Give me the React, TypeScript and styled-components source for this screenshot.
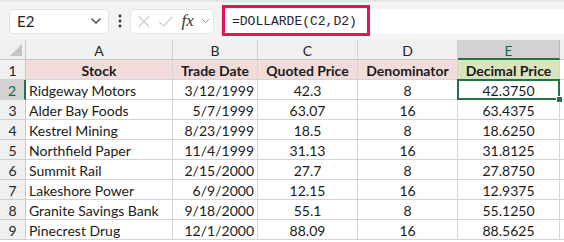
import React from "react";
import styled, { createGlobalStyle } from "styled-components";

const GlobalStyle = createGlobalStyle`
  html, body { margin: 0; padding: 0; background: #ffffff; }
  body { font-family: Lato, "Liberation Sans", sans-serif; }
`;

const rows = [
  ["Ridgeway Motors", "3/12/1999", "42.3", "8", "42.3750"],
  ["Alder Bay Foods", "5/7/1999", "63.07", "16", "63.4375"],
  ["Kestrel Mining", "8/23/1999", "18.5", "8", "18.6250"],
  ["Northfield Paper", "11/4/1999", "31.13", "16", "31.8125"],
  ["Summit Rail", "2/15/2000", "27.7", "8", "27.8750"],
  ["Lakeshore Power", "6/9/2000", "12.15", "16", "12.9375"],
  ["Granite Savings Bank", "9/18/2000", "55.1", "8", "55.1250"],
  ["Pinecrest Drug", "12/1/2000", "88.09", "16", "88.5625"],
];

const Page = styled.div`
  width: 564px;
  height: 242px;
  overflow: hidden;
  background: #fff;
`;

const Toolbar = styled.div`
  height: 40px;
  background: #f3f3f3;
  border-top: 2px solid #e6e6e6;
  box-sizing: border-box;
  display: flex;
  align-items: center;
  padding: 0 0 0 9px;
`;

const Field = styled.div<{ $w: number }>`
  width: ${(p) => p.$w}px;
  height: 25px;
  box-sizing: border-box;
  background: #fff;
  border: 1px solid #e4e4e4;
  border-radius: 4px;
  display: flex;
  align-items: center;
`;

const NameBox = styled(Field)`
  padding: 0 6px 0 7px;
  justify-content: space-between;
  font-size: 15px;
  color: #1f1f1f;
`;

const Dots = styled.div`
  width: 21px;
  display: flex;
  justify-content: center;
`;

const FxBox = styled(Field)`
  margin-right: 7px;
  padding: 0 3px 0 6px;
  gap: 7px;
`;

const Fx = styled.span`
  font-family: "Liberation Serif", serif;
  font-style: italic;
  font-size: 17px;
  color: #333;
  margin-left: 1px;
`;

const FormulaBox = styled.div`
  flex: 1;
  height: 25px;
  background: #fff;
  border-left: 1px solid #e4e4e4;
  border-radius: 4px 0 0 4px;
  position: relative;
  display: flex;
  align-items: center;
  padding-left: 10px;
  font-family: "Liberation Mono", monospace;
  font-size: 13px;
  color: #1d2430;
`;

const Highlight = styled.div`
  position: absolute;
  left: 0;
  top: -4px;
  width: 148px;
  height: 31px;
  box-sizing: border-box;
  border: 3px solid #e3174d;
`;

const Grid = styled.div`
  display: grid;
  grid-template-columns: 26px 147px 85px 100px 100px 102px 1fr;
  grid-auto-rows: 20px;
  font-size: 14px;
  color: #1a1a1a;
`;

const Cell = styled.div<{
  $align?: "left" | "right" | "center";
  $bg?: string;
  $bold?: boolean;
}>`
  box-sizing: border-box;
  border-right: 1px solid #d4d4d4;
  border-bottom: 1px solid #d4d4d4;
  background: ${(p) => p.$bg || "#fff"};
  font-weight: ${(p) => (p.$bold ? 700 : 400)};
  text-align: ${(p) => p.$align || "left"};
  padding: 1px 3px 0;
  line-height: 19px;
  white-space: nowrap;
  overflow: hidden;
`;

const ColHead = styled.div<{ $active?: boolean }>`
  box-sizing: border-box;
  background: ${(p) => (p.$active ? "#d2d2d2" : "#f0f0f0")};
  color: ${(p) => (p.$active ? "#0f6b3a" : "#262626")};
  border-right: 1px solid ${(p) => (p.$active ? "#b8b8b8" : "#d0d0d0")};
  border-bottom: ${(p) => (p.$active ? "2px solid #217346" : "1px solid #c8c8c8")};
  text-align: center;
  line-height: 19px;
  padding-top: 1px;
`;

const Corner = styled.div`
  box-sizing: border-box;
  background: #f0f0f0;
  border-right: 1px solid #c8c8c8;
  border-bottom: 1px solid #c8c8c8;
  position: relative;
  &::after {
    content: "";
    position: absolute;
    right: 3px;
    bottom: 3px;
    border-left: 12px solid transparent;
    border-bottom: 12px solid #c4c4c4;
  }
`;

const RowHead = styled.div<{ $active?: boolean }>`
  box-sizing: border-box;
  background: ${(p) => (p.$active ? "#d2d2d2" : "#f0f0f0")};
  color: ${(p) => (p.$active ? "#0f6b3a" : "#262626")};
  border-right: ${(p) => (p.$active ? "2px solid #217346" : "1px solid #c8c8c8")};
  border-bottom: 1px solid #d0d0d0;
  text-align: center;
  line-height: 19px;
  padding-top: 1px;
`;

const Selected = styled(Cell)`
  position: relative;
  overflow: visible;
  &::before {
    content: "";
    position: absolute;
    left: -1px;
    top: -1px;
    right: -1px;
    bottom: -1px;
    border: 2px solid #217346;
  }
  &::after {
    content: "";
    position: absolute;
    right: -4px;
    bottom: -4px;
    width: 5px;
    height: 5px;
    background: #217346;
    border: 1px solid #fff;
  }
`;

const Chevron = ({ color = "#444", w = 12 }: { color?: string; w?: number }) => (
  <svg width={w} height="8" viewBox="0 0 12 8">
    <path d="M1.5 1.5 L6 6 L10.5 1.5" fill="none" stroke={color} strokeWidth="1.3" />
  </svg>
);

const App = () => {
  const aligns: ("left" | "right" | "center")[] = ["left", "right", "center", "center", "center"];
  return (
    <Page>
      <GlobalStyle />
      <Toolbar>
        <NameBox $w={100}>
          <span>E2</span>
          <Chevron />
        </NameBox>
        <Dots>
          <svg width="4" height="14" viewBox="0 0 4 14">
            <circle cx="2" cy="2" r="1.4" fill="#333" />
            <circle cx="2" cy="7" r="1.4" fill="#333" />
            <circle cx="2" cy="12" r="1.4" fill="#333" />
          </svg>
        </Dots>
        <FxBox $w={84}>
          <svg width="15" height="15" viewBox="0 0 16 16">
            <path d="M2 2 L14 14 M14 2 L2 14" stroke="#c4c4c4" strokeWidth="1.3" />
          </svg>
          <svg width="17" height="15" viewBox="0 0 18 16">
            <path d="M1.5 8.5 L6.5 13.5 L16.5 2.5" fill="none" stroke="#c4c4c4" strokeWidth="1.3" />
          </svg>
          <Fx>fx</Fx>
          <Chevron color="#888" w={10} />
        </FxBox>
        <FormulaBox>
          <Highlight />
          =DOLLARDE(C2,D2)
        </FormulaBox>
      </Toolbar>
      <Grid>
        <Corner />
        {["A", "B", "C", "D", "E"].map((c) => (
          <ColHead key={c} $active={c === "E"}>
            {c}
          </ColHead>
        ))}
        <ColHead />
        <RowHead>1</RowHead>
        {["Stock", "Trade Date", "Quoted Price", "Denominator"].map((h) => (
          <Cell key={h} $align="center" $bg="#f2dcdb" $bold>
            {h}
          </Cell>
        ))}
        <Cell $align="center" $bg="#d8e4bc" $bold>
          Decimal Price
        </Cell>
        <Cell />
        {rows.map((r, i) => (
          <React.Fragment key={r[0]}>
            <RowHead $active={i === 0}>{i + 2}</RowHead>
            {r.map((v, j) =>
              i === 0 && j === 4 ? (
                <Selected key={j} $align="center">
                  {v}
                </Selected>
              ) : (
                <Cell key={j} $align={aligns[j]}>
                  {v}
                </Cell>
              )
            )}
            <Cell />
          </React.Fragment>
        ))}
      </Grid>
    </Page>
  );
};

export default App;
